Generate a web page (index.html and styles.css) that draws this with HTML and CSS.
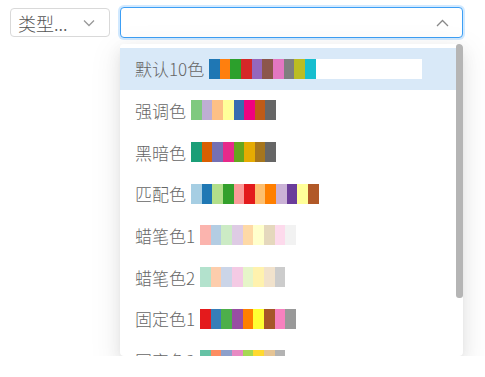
FILE: index.html
```html
<!DOCTYPE html>
<html lang="zh">
<head>
<meta charset="utf-8">
<link rel="stylesheet" href="styles.css">
</head>
<body>
<div class="bar">
  <div class="sel small">
    <span class="sel-text">类型...</span>
    <svg class="chev" width="12" height="8" viewBox="0 0 12 8"><path d="M1 1.5 L6 6.5 L11 1.5" fill="none" stroke="#999" stroke-width="1.3"/></svg>
  </div>
  <div class="wrap">
    <div class="sel big">
      <svg class="chev" width="13" height="8" viewBox="0 0 13 8"><path d="M1 7 L6.5 1.5 L12 7" fill="none" stroke="#888" stroke-width="1.3"/></svg>
    </div>
    <div class="menu">
      <div class="list">
        <div class="item active"><span class="label">默认10色</span><span class="sw"><b class="c" style="background:#1f77b4"></b><b class="c" style="background:#ff7f0e"></b><b class="c" style="background:#2ca02c"></b><b class="c" style="background:#d62728"></b><b class="c" style="background:#9467bd"></b><b class="c" style="background:#8c564b"></b><b class="c" style="background:#e377c2"></b><b class="c" style="background:#7f7f7f"></b><b class="c" style="background:#bcbd22"></b><b class="c" style="background:#17becf"></b></span></div>
        <div class="item"><span class="label">强调色</span><span class="sw"><b class="c" style="background:#7fc97f"></b><b class="c" style="background:#beaed4"></b><b class="c" style="background:#fdc086"></b><b class="c" style="background:#ffff99"></b><b class="c" style="background:#386cb0"></b><b class="c" style="background:#f0027f"></b><b class="c" style="background:#bf5b17"></b><b class="c" style="background:#666666"></b></span></div>
        <div class="item"><span class="label">黑暗色</span><span class="sw"><b class="c" style="background:#1b9e77"></b><b class="c" style="background:#d95f02"></b><b class="c" style="background:#7570b3"></b><b class="c" style="background:#e7298a"></b><b class="c" style="background:#66a61e"></b><b class="c" style="background:#e6ab02"></b><b class="c" style="background:#a6761d"></b><b class="c" style="background:#666666"></b></span></div>
        <div class="item"><span class="label">匹配色</span><span class="sw"><b class="c" style="background:#a6cee3"></b><b class="c" style="background:#1f78b4"></b><b class="c" style="background:#b2df8a"></b><b class="c" style="background:#33a02c"></b><b class="c" style="background:#fb9a99"></b><b class="c" style="background:#e31a1c"></b><b class="c" style="background:#fdbf6f"></b><b class="c" style="background:#ff7f00"></b><b class="c" style="background:#cab2d6"></b><b class="c" style="background:#6a3d9a"></b><b class="c" style="background:#ffff99"></b><b class="c" style="background:#b15928"></b></span></div>
        <div class="item"><span class="label">蜡笔色1</span><span class="sw"><b class="c" style="background:#fbb4ae"></b><b class="c" style="background:#b3cde3"></b><b class="c" style="background:#ccebc5"></b><b class="c" style="background:#decbe4"></b><b class="c" style="background:#fed9a6"></b><b class="c" style="background:#ffffcc"></b><b class="c" style="background:#e5d8bd"></b><b class="c" style="background:#fddaec"></b><b class="c" style="background:#f2f2f2"></b></span></div>
        <div class="item"><span class="label">蜡笔色2</span><span class="sw"><b class="c" style="background:#b3e2cd"></b><b class="c" style="background:#fdcdac"></b><b class="c" style="background:#cbd5e8"></b><b class="c" style="background:#f4cae4"></b><b class="c" style="background:#e6f5c9"></b><b class="c" style="background:#fff2ae"></b><b class="c" style="background:#f1e2cc"></b><b class="c" style="background:#cccccc"></b></span></div>
        <div class="item"><span class="label">固定色1</span><span class="sw"><b class="c" style="background:#e41a1c"></b><b class="c" style="background:#377eb8"></b><b class="c" style="background:#4daf4a"></b><b class="c" style="background:#984ea3"></b><b class="c" style="background:#ff7f00"></b><b class="c" style="background:#ffff33"></b><b class="c" style="background:#a65628"></b><b class="c" style="background:#f781bf"></b><b class="c" style="background:#999999"></b></span></div>
        <div class="item"><span class="label">固定色2</span><span class="sw"><b class="c" style="background:#66c2a5"></b><b class="c" style="background:#fc8d62"></b><b class="c" style="background:#8da0cb"></b><b class="c" style="background:#e78ac3"></b><b class="c" style="background:#a6d854"></b><b class="c" style="background:#ffd92f"></b><b class="c" style="background:#e5c494"></b><b class="c" style="background:#b3b3b3"></b></span></div>
      </div>
      <div class="track"><div class="thumb"></div></div>
    </div>
  </div>
</div>
</body>
</html>
```

FILE: styles.css
```css
html, body {
  margin: 0;
  padding: 0;
  background: #fff;
  font-family: "Noto Sans CJK SC", "Noto Sans", sans-serif;
}
.bar {
  display: flex;
  align-items: flex-start;
  gap: 10px;
  padding: 7px 0 0 10px;
}
.sel {
  box-sizing: border-box;
  display: flex;
  align-items: center;
  background: #fff;
  border-radius: 4px;
}
.small {
  margin-top: 1px;
  width: 100px;
  height: 29px;
  border: 1px solid #d9d9d9;
  padding: 0 14px 0 7px;
  justify-content: space-between;
}
.sel-text {
  font-size: 18px;
  font-weight: 300;
  color: #555;
  line-height: 1;
}
.wrap {
  display: flex;
  flex-direction: column;
  gap: 6px;
  width: 343px;
}
.big {
  width: 343px;
  height: 31px;
  border: 1px solid #3d9ff5;
  box-shadow: 0 0 0 2px rgba(24, 144, 255, 0.2);
  justify-content: flex-end;
  padding-right: 13px;
}
.menu {
  display: flex;
  width: 343px;
  height: 312px;
  background: #fff;
  border-radius: 4px;
  box-shadow: 0 3px 6px -4px rgba(0,0,0,0.12), 0 6px 16px 0 rgba(0,0,0,0.08), 0 9px 28px 8px rgba(0,0,0,0.05);
  overflow: hidden;
}
.list {
  flex: 1;
  padding: 4px 0;
}
.track {
  width: 7px;
  flex: none;
}
.thumb {
  width: 7px;
  height: 254px;
  background: #b5b5b5;
  border-radius: 3px;
}
.item {
  display: flex;
  align-items: center;
  gap: 5px;
  height: 41.67px;
  padding-left: 15px;
  font-size: 17px;
  font-weight: 300;
  color: #666;
}
.item.active {
  background: #d9e9f8;
}
.label {
  line-height: 1;
}
.sw {
  display: flex;
  width: 213px;
  height: 20px;
  background: #fff;
}
.c {
  display: block;
  width: 5%;
  height: 100%;
}
```
